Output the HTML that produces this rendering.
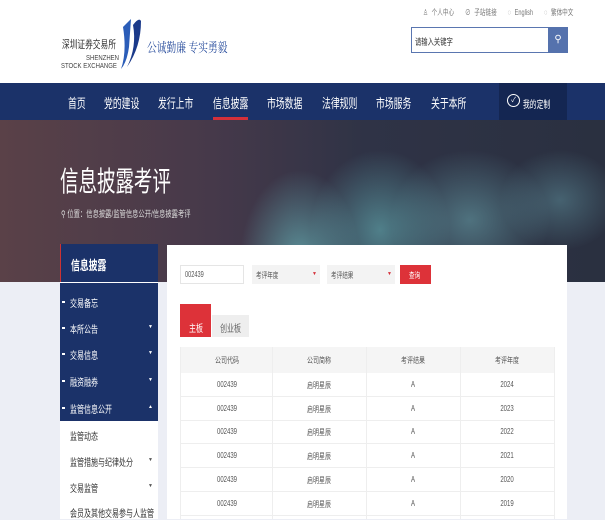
<!DOCTYPE html>
<html><head><meta charset="utf-8">
<style>
*{margin:0;padding:0;box-sizing:border-box}
body{width:605px;height:519px;overflow:hidden;background:#eceef5;font-family:"Liberation Sans","Noto Sans CJK SC",sans-serif;position:relative;color:#333}
.abs{position:absolute}
.n{transform:scaleX(.7);transform-origin:0 0;white-space:nowrap}
.top{left:0;top:0;width:605px;height:83px;background:#fff}
.nav{left:0;top:83px;width:605px;height:37px;background:#1b3269}
.nav span{position:absolute;top:10px;color:#fff;font-size:13px;transform:scaleX(.68);transform-origin:0 0;white-space:nowrap}
.banner{left:0;top:120px;width:605px;height:162px;background:
radial-gradient(ellipse 60px 90px at 300px 140px,rgba(120,220,220,.55),transparent),
radial-gradient(ellipse 70px 80px at 380px 110px,rgba(120,220,220,.45),transparent),
radial-gradient(ellipse 80px 70px at 470px 100px,rgba(130,210,215,.4),transparent),
radial-gradient(ellipse 60px 50px at 560px 80px,rgba(120,190,200,.35),transparent),
linear-gradient(90deg,#5a4148 0%,#46394a 35%,#2f3346 60%,#2a3040 100%)}
.side{left:60px;top:244px;width:98px;height:275px;background:#fff}
.sidehead{left:60px;top:244px;width:98px;height:38px;background:#1b3269;border-left:1px solid #c33}
.sidedark{left:60px;top:283px;width:98px;height:138px;background:#1b3269}
.si{position:absolute;left:70px;font-size:10px;color:#fff}
.si:before{content:"";position:absolute;left:-8px;top:6px;width:3px;height:2px;background:#fff}
.sw{position:absolute;left:70px;font-size:10px;color:#333}
.ar{position:absolute;left:148px;font-size:5px}
.panel{left:167px;top:245px;width:400px;height:274px;background:#fff}
.th,.td{position:absolute;font-size:8px;text-align:center;width:94px;color:#555;transform:scaleX(.75)}
.ln{position:absolute;background:#eee}
</style></head><body>
<div class="abs top"></div>
<div class="abs n" style="left:62px;top:36px;font-size:11px;color:#333;transform:scaleX(.7)">深圳证券交易所</div>
<div class="abs n" style="left:86px;top:53px;font-size:7.5px;color:#444;transform:scaleX(.8)">SHENZHEN</div>
<div class="abs n" style="left:61px;top:61px;font-size:7.5px;color:#444;transform:scaleX(.8)">STOCK EXCHANGE</div>
<svg class="abs" style="left:119px;top:17px" width="24" height="52"><path d="M4 10 Q12 2 12 2 L10 30 Q8 45 2 52 Q8 35 4 10Z" fill="#2b5db8"/><path d="M14 8 Q20 0 22 4 Q22 30 8 50 Q18 30 14 8Z" fill="#1b3a8a"/></svg>
<div class="abs n" style="left:147px;top:37px;font-size:13px;color:#2b4f9e;font-family:'Noto Serif CJK SC',serif;transform:scaleX(.75)">公诚勤廉 专实勇毅</div>
<div class="abs n" style="left:423px;top:7px;font-size:8px;color:#777;word-spacing:3px">♙ 个人中心 &nbsp; ⊘ 子站链接 &nbsp; ◌ English &nbsp; ◌ 繁体中文</div>
<div class="abs" style="left:411px;top:27px;width:138px;height:26px;border:1px solid #5a76b0;background:#fff"></div>
<div class="abs n" style="left:415px;top:35px;font-size:9px;color:#333">请输入关键字</div>
<div class="abs" style="left:548px;top:27px;width:20px;height:26px;background:#5572ad;color:#fff;font-size:10px;text-align:center;line-height:26px">&#9906;</div>
<div class="abs nav">
<span style="left:68px">首页</span><span style="left:104px">党的建设</span><span style="left:158px">发行上市</span><span style="left:213px">信息披露</span><span style="left:267px">市场数据</span><span style="left:322px">法律规则</span><span style="left:376px">市场服务</span><span style="left:431px">关于本所</span>
<div style="position:absolute;left:213px;top:34px;width:35px;height:3px;background:#d4303a"></div>
<div style="position:absolute;left:499px;top:0;width:68px;height:37px;background:#142652"></div>
<div style="position:absolute;left:507px;top:11px;width:13px;height:13px;border:1px solid #fff;border-radius:50%;color:#fff;font-size:7px;text-align:center;line-height:11px">✓</div>
<span style="left:523px;top:13px;font-size:10px">我的定制</span>
</div>
<div class="abs banner"></div>
<div class="abs n" style="left:60px;top:160px;font-size:28px;color:#fff;transform:scaleX(.66)">信息披露考评</div>
<div class="abs n" style="left:61px;top:207px;font-size:9px;color:#ddd">⚲ 位置：信息披露/监管信息公开/信息披露考评</div>
<div class="abs side"></div>
<div class="abs sidedark"></div>
<div class="abs sidehead"></div>
<div class="abs n" style="left:71px;top:255px;font-size:13px;color:#fff;font-weight:bold;transform:scaleX(.68)">信息披露</div>
<div class="si" style="top:295px"><span class="n" style="display:inline-block">交易备忘</span></div>
<div class="si" style="top:321px"><span class="n" style="display:inline-block">本所公告</span></div><div class="ar" style="top:324px;color:#fff">▼</div>
<div class="si" style="top:347px"><span class="n" style="display:inline-block">交易信息</span></div><div class="ar" style="top:350px;color:#fff">▼</div>
<div class="si" style="top:374px"><span class="n" style="display:inline-block">融资融券</span></div><div class="ar" style="top:377px;color:#fff">▼</div>
<div class="si" style="top:401px"><span class="n" style="display:inline-block">监管信息公开</span></div><div class="ar" style="top:404px;color:#fff">▲</div>
<div class="sw n" style="top:428px">监管动态</div>
<div class="sw n" style="top:454px">监管措施与纪律处分</div><div class="ar" style="top:457px;color:#555">▼</div>
<div class="sw n" style="top:480px">交易监管</div><div class="ar" style="top:483px;color:#555">▼</div>
<div class="sw n" style="top:505px">会员及其他交易参与人监管</div>
<div class="abs panel"></div>
<div class="abs" style="left:180px;top:265px;width:64px;height:19px;border:1px solid #e5e5e5"></div>
<div class="abs n" style="left:185px;top:270px;font-size:8px;color:#555">002439</div>
<div class="abs" style="left:252px;top:265px;width:68px;height:19px;background:#f3f3f3"><span class="n" style="position:absolute;left:4px;top:5px;font-size:8px;color:#555">考评年度</span><span style="position:absolute;right:3px;color:#d4303a;font-size:5px;top:6px">▼</span></div>
<div class="abs" style="left:327px;top:265px;width:68px;height:19px;background:#f3f3f3"><span class="n" style="position:absolute;left:4px;top:5px;font-size:8px;color:#555">考评结果</span><span style="position:absolute;right:3px;color:#d4303a;font-size:5px;top:6px">▼</span></div>
<div class="abs" style="left:400px;top:265px;width:31px;height:19px;background:#dd3239"><span class="n" style="position:absolute;left:9px;top:5px;font-size:8px;color:#fff">查询</span></div>
<div class="abs" style="left:180px;top:304px;width:31px;height:33px;background:#dd3239"><span class="n" style="position:absolute;left:9px;top:16px;font-size:10px;color:#fff">主板</span></div>
<div class="abs" style="left:212px;top:315px;width:37px;height:22px;background:#eee"><span class="n" style="position:absolute;left:8px;top:5px;font-size:10px;color:#666">创业板</span></div>
<div class="abs" style="left:180px;top:347px;width:374px;height:26px;background:#f5f5f5"></div>
<div class="th" style="left:180px;top:355px">公司代码</div><div class="th" style="left:272px;top:355px">公司简称</div><div class="th" style="left:366px;top:355px">考评结果</div><div class="th" style="left:460px;top:355px">考评年度</div>
<div class="ln" style="left:272px;top:347px;width:1px;height:172px"></div>
<div class="ln" style="left:366px;top:347px;width:1px;height:172px"></div>
<div class="ln" style="left:460px;top:347px;width:1px;height:172px"></div>
<div class="ln" style="left:180px;top:347px;width:1px;height:172px"></div>
<div class="ln" style="left:554px;top:347px;width:1px;height:172px"></div>
<div class="ln" style="left:180px;top:396px;width:374px;height:1px"></div>
<div class="ln" style="left:180px;top:420px;width:374px;height:1px"></div>
<div class="ln" style="left:180px;top:443px;width:374px;height:1px"></div>
<div class="ln" style="left:180px;top:467px;width:374px;height:1px"></div>
<div class="ln" style="left:180px;top:491px;width:374px;height:1px"></div>
<div class="ln" style="left:180px;top:515px;width:374px;height:1px"></div>
<div class="td" style="left:180px;top:380px">002439</div><div class="td" style="left:272px;top:380px">启明星辰</div><div class="td" style="left:366px;top:380px">A</div><div class="td" style="left:460px;top:380px">2024</div>
<div class="td" style="left:180px;top:404px">002439</div><div class="td" style="left:272px;top:404px">启明星辰</div><div class="td" style="left:366px;top:404px">A</div><div class="td" style="left:460px;top:404px">2023</div>
<div class="td" style="left:180px;top:427px">002439</div><div class="td" style="left:272px;top:427px">启明星辰</div><div class="td" style="left:366px;top:427px">A</div><div class="td" style="left:460px;top:427px">2022</div>
<div class="td" style="left:180px;top:451px">002439</div><div class="td" style="left:272px;top:451px">启明星辰</div><div class="td" style="left:366px;top:451px">A</div><div class="td" style="left:460px;top:451px">2021</div>
<div class="td" style="left:180px;top:475px">002439</div><div class="td" style="left:272px;top:475px">启明星辰</div><div class="td" style="left:366px;top:475px">A</div><div class="td" style="left:460px;top:475px">2020</div>
<div class="td" style="left:180px;top:499px">002439</div><div class="td" style="left:272px;top:499px">启明星辰</div><div class="td" style="left:366px;top:499px">A</div><div class="td" style="left:460px;top:499px">2019</div>
</body></html>
